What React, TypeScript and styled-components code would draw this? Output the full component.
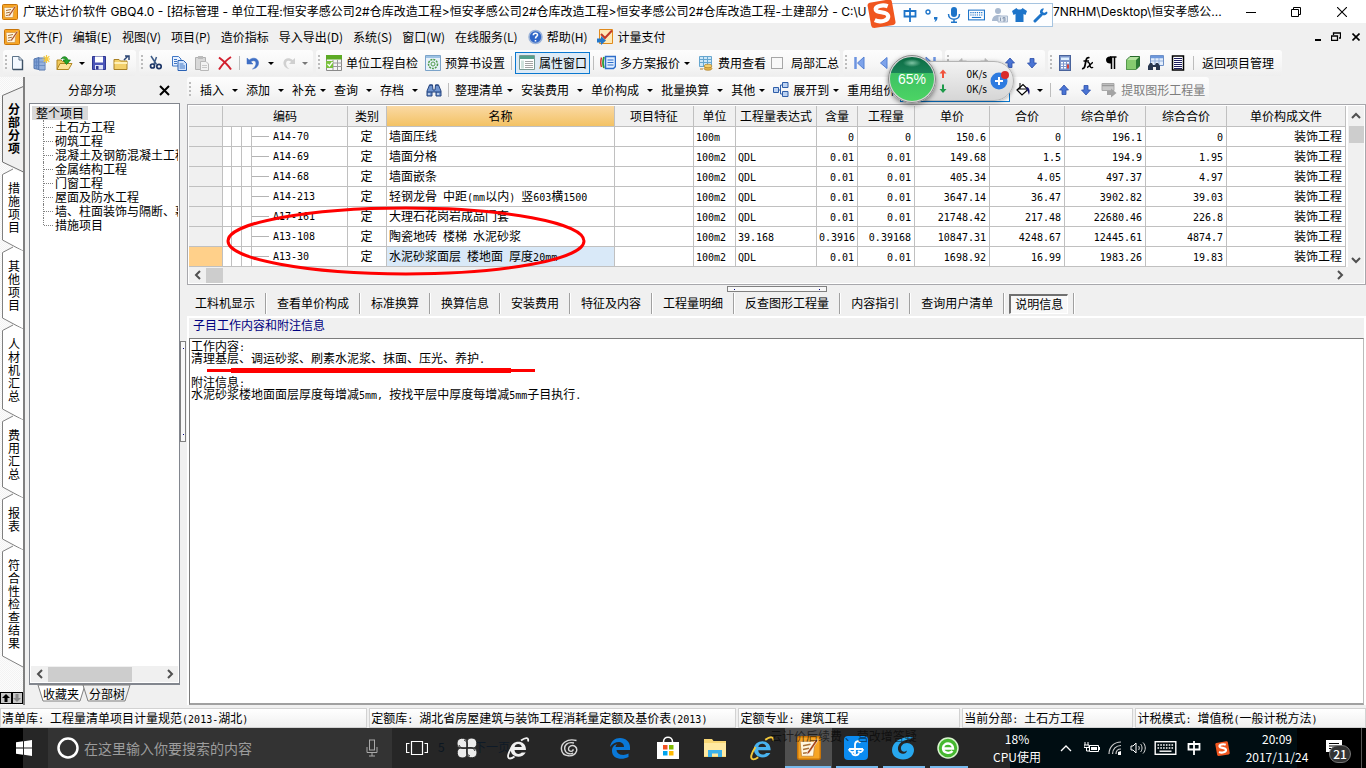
import React from "react";
import styled, { createGlobalStyle, css } from "styled-components";

const CJK = '"Noto Sans CJK SC", sans-serif';

const Global = createGlobalStyle`
  * { box-sizing: border-box; }
  body { margin: 0; background: #f0f0f0; font-family: ${CJK}; font-size: 12px; line-height: 16px; color: #000; overflow: hidden; }
  button { font: inherit; color: inherit; background: none; border: 0; padding: 0; margin: 0; white-space: nowrap; }
  svg { display: block; flex: none; }
`;

const Half = styled.span`
  font-family: "DejaVu Sans Mono", monospace;
  font-size: 10px;
  line-height: 0;
  white-space: pre;
`;

/* Half-width runs take a six pixel cell beside the twelve pixel ideographs. */
const T = ({ children }: { children: string }) => (
  <>
    {children.split(/([\x20-\x7e]+)/).map((run, i) =>
      i % 2 ? <Half key={i}>{run}</Half> : run
    )}
  </>
);

/* ---------- shell ---------- */
const Shell = styled.div`
  position: relative;
  display: flex;
  flex-direction: column;
  height: 100vh;
  overflow: hidden;
`;
const TitleBar = styled.header`
  display: flex;
  align-items: center;
  height: 23px;
  flex: none;
  background: #fff;
  padding-left: 2px;
  white-space: nowrap;
  font-family: Inter, ${CJK};
`;
const TitleText = styled.span`
  width: 1030px;
  margin-left: 5px;
  overflow: hidden;
`;
const WinButtons = styled.div`
  display: flex;
  margin-left: auto;
`;
const WinButton = styled.button<{ $w: number }>`
  width: ${(p) => p.$w}px;
  height: 22px;
  display: flex;
  align-items: center;
  justify-content: center;
`;
const MenuBar = styled.nav`
  display: flex;
  align-items: center;
  gap: 10px;
  height: 27px;
  flex: none;
  padding-left: 4px;
`;
const MenuItem = styled.button`
  display: flex;
  align-items: center;
  gap: 4px;
`;
const ToolRow = styled.div`
  display: flex;
  gap: 3px;
  height: 26px;
  flex: none;
  padding-left: 3px;
`;
const Segment = styled.div<{ $w: number }>`
  display: flex;
  align-items: center;
  width: ${(p) => p.$w}px;
  flex: none;
  height: 26px;
  white-space: nowrap;
  border-radius: 3px;
  background: linear-gradient(#fdfdfd, #f6f6f6 60%, #eee);
`;
const Grip = styled.span<{ $r?: number }>`
  width: 2px;
  height: 16px;
  margin: 0 ${(p) => p.$r ?? 5}px 0 2px;
  flex: none;
  background: repeating-linear-gradient(#bcbcbc 0 2px, transparent 2px 4px);
`;
const Tool = styled.button<{ $w?: number; $dim?: boolean; $end?: boolean }>`
  display: flex;
  align-items: center;
  justify-content: ${(p) => (p.$end ? "flex-end" : "flex-start")};
  gap: 4px;
  height: 22px;
  flex: none;
  width: ${(p) => (p.$w ? p.$w + "px" : "auto")};
  color: ${(p) => (p.$dim ? "#7d7d7d" : "#000")};
`;
const Pressed = styled(Tool)`
  border: 1px solid #0a78d0;
  background: #deebf6;
  padding-left: 3px;
`;
const Divider = styled.span<{ $l?: number; $r?: number }>`
  width: 1px;
  height: 14px;
  flex: none;
  background: #bdbdbd;
  margin: 0 ${(p) => p.$r ?? 6}px 0 ${(p) => p.$l ?? 0}px;
`;
const Caret = styled.span<{ $dim?: boolean; $l?: number }>`
  border: 3px solid transparent;
  border-top-color: ${(p) => (p.$dim ? "#777" : "#000")};
  border-bottom: 0;
  width: 6px;
  margin-left: ${(p) => p.$l ?? 0}px;
  flex: none;
`;
const DropTool = styled.button<{ $tight?: boolean }>`
  display: flex;
  align-items: center;
  gap: ${(p) => (p.$tight ? 4 : 8)}px;
  margin-right: 8px;
  flex: none;
`;
const Check = styled.label`
  display: flex;
  align-items: center;
  gap: 8px;
  input { appearance: none; width: 12px; height: 12px; margin: 0; border: 1px solid #a6a6a6; background: #f8f8f8; }
`;

/* ---------- work area ---------- */
const Work = styled.div`
  display: flex;
  flex: 1;
  min-height: 0;
  margin-top: 1px;
`;
const Strip = styled.nav`
  width: 25px;
  flex: none;
  display: flex;
  flex-direction: column;
  overflow: hidden;
  background: repeating-conic-gradient(#f3f3f3 0 25%, #fcfcfc 0 50%) 0 0 / 2px 2px;
  border-right: 2px solid #808080;
`;
const SideTab = styled.button<{ $on?: boolean }>`
  position: relative;
  flex: none;
  width: 25px;
  padding: ${(p) => (p.$on ? "25px 5px 15px 8px" : "12px 5px 14px 8px")};
  line-height: 13px;
  font-weight: ${(p) => (p.$on ? 700 : 400)};
  white-space: normal;
  word-break: break-all;
  span { position: relative; display: block; width: 12px; }
  svg { position: absolute; left: 0; top: 0; overflow: visible; }
`;
const StripEnd = styled.div`
  display: flex;
  margin: auto 0 1px;
`;
const StripButton = styled.button`
  width: 12px;
  height: 12px;
  border: 1px solid #000;
  background: #c8c8c8;
  display: grid;
  place-items: center;
`;
const TreePane = styled.aside`
  width: 151px;
  margin-left: 4px;
  flex: none;
  display: flex;
  flex-direction: column;
  padding-bottom: 3px;
`;
const PaneHead = styled.div`
  display: flex;
  align-items: center;
  height: 26px;
  padding: 0 10px 0 39px;
  justify-content: space-between;
  flex: none;
`;
const TreeBox = styled.div`
  flex: 1;
  min-height: 0;
  display: flex;
  flex-direction: column;
  justify-content: space-between;
  background: #fff;
  border: 1px solid #82868e;
  border-bottom-width: 2px;
  padding: 2px 1px 1px;
`;
const Tree = styled.ul`
  list-style: none;
  margin: 0;
  padding: 0 0 12px;
  line-height: 14px;
  overflow: hidden;
  white-space: nowrap;
`;
const Root = styled.li`
  width: 56px;
  margin-left: 1px;
  padding-left: 4px;
  background: #d9d9d9;
`;
const Leaf = styled.li`
  display: flex;
  margin-left: 12px;
  height: 14px;
  border-left: 1px dotted #808080;
  &:last-child { height: 7px; }
  &::before { content: ""; width: 9px; height: 7px; border-bottom: 1px dotted #808080; margin-right: 2px; flex: none; }
`;
const HScroll = styled.div`
  display: flex;
  align-items: center;
  height: 16px;
  flex: none;
  background: #f0f0f0;
`;
const ScrollButton = styled.button`
  width: 17px;
  height: 15px;
  display: grid;
  place-items: center;
`;
const Thumb = styled.div<{ $w: number; $h: number; $t?: number }>`
  width: ${(p) => p.$w}px;
  height: ${(p) => p.$h}px;
  margin-top: ${(p) => p.$t ?? 0}px;
  background: #cdcdcd;
`;
const ScrollCorner = styled.div`
  width: 16px;
  flex: none;
`;
const Push = styled.span`
  flex: 1;
`;
const FootTabs = styled.div`
  display: flex;
  height: 17px;
  flex: none;
  padding-left: 9px;
`;
const FootTab = styled.button`
  position: relative;
  width: 46px;
  line-height: 16px;
  span { position: relative; }
  svg { position: absolute; left: 0; top: 0; overflow: visible; }
`;
const SideSplit = styled.div`
  width: 7px;
  flex: none;
  display: flex;
  flex-direction: column;
  padding-top: 264px;
`;
const Handle = styled.div<{ $side?: boolean }>`
  border: 1px solid #808080;
  background: #f8f8f8;
  display: flex;
  justify-content: space-between;
  flex-direction: ${(p) => (p.$side ? "column" : "row")};
  align-items: center;
  ${(p) => (p.$side ? "width: 6px; height: 101px; padding: 6px 0;" : "width: 100px; height: 6px; padding: 0 6px;")}
  &::before, &::after { content: ""; width: 1px; height: 1px; background: #000080; }
`;
const Main = styled.main`
  flex: 1;
  min-width: 0;
  display: flex;
  flex-direction: column;
`;
const GridBox = styled.section`
  position: relative;
  border: 1px solid #a8a8ac;
  padding: 1px;
  background: #fff;
  margin-top: 1px;
  flex: none;
`;
const GridTop = styled.div`
  display: flex;
`;
const GridClip = styled.div`
  flex: 1;
  min-width: 0;
  height: 161px;
  overflow: hidden;
`;
const Table = styled.table`
  width: 100%;
  table-layout: fixed;
  border-collapse: separate;
  border-spacing: 0;
`;
const line = css`
  border-right: 1px solid #c0c0c0;
  border-bottom: 1px solid #c0c0c0;
`;
const Th = styled.th<{ $hot?: boolean }>`
  ${line}
  height: 21px;
  padding: 0 0 1px;
  font-weight: 400;
  white-space: nowrap;
  background: ${(p) => (p.$hot ? "linear-gradient(#fad9a4, #f3c264)" : "#f0f0f0")};
`;
const Td = styled.td<{ $a?: "right" | "center"; $bg?: string }>`
  ${line}
  height: 20px;
  padding: 0 3px 2px 2px;
  text-align: ${(p) => p.$a ?? "left"};
  white-space: nowrap;
  overflow: hidden;
  background: ${(p) => p.$bg ?? "#fff"};
`;
const CodeTd = styled(Td)`
  padding: 0;
`;
const CodeCell = styled.div`
  display: flex;
  align-items: center;
  height: 19px;
`;
const Guide = styled.i<{ $w: number }>`
  width: ${(p) => p.$w}px;
  height: 19px;
  border-right: 1px solid #c0c0c0;
`;
const Dash = styled.i`
  width: 17px;
  height: 1px;
  background: #b4b4b4;
  margin-right: 4px;
`;
const VScroll = styled.div`
  width: 18px;
  border-left: 2px solid #fff;
  flex: none;
  background: #f0f0f0;
  display: flex;
  flex-direction: column;
  align-items: center;
  padding-top: 2px;
`;
const Splitter = styled.div`
  display: flex;
  justify-content: center;
  height: 7px;
  padding-top: 1px;
  flex: none;
`;
const Tabs = styled.div`
  display: flex;
  height: 24px;
  flex: none;
  padding: 1px 0 2px;
`;
const Tab = styled.button`
  padding: 0 10px 2px 11px;
  border-right: 1px solid #a0a0a0;
  box-shadow: 1px 0 #fff;
  &:first-child { padding-left: 8px; }
`;
const TabOn = styled(Tab)`
  padding: 0 5px;
  span {
    display: block;
    height: 20px;
    line-height: 16px;
    padding: 0 4px;
    border: 1px solid #fff;
    border-top: 2px solid #707070;
    border-left: 2px solid #707070;
    background: #f8f8f8;
  }
`;
const Info = styled.section`
  flex: 1;
  min-height: 0;
  display: flex;
  flex-direction: column;
  border: 2px solid #fff;
  border-bottom: 0;
`;
const InfoHead = styled.h2`
  margin: 0;
  height: 20px;
  font-size: 12px;
  font-weight: 400;
  line-height: 14px;
  padding-left: 4px;
  color: #000080;
  flex: none;
`;
const InfoBody = styled.div`
  position: relative;
  flex: 1;
  background: #fff;
  border: 1px solid #7c7c7c;
  border-right-color: #bbb;
  border-bottom: 2px solid #a0a0a0;
  padding: 1px;
  line-height: 12px;
  p { margin: 0 0 12px; }
`;
const Ink = styled.svg<{ $x: number; $y: number }>`
  position: absolute;
  left: ${(p) => p.$x}px;
  top: ${(p) => p.$y}px;
  pointer-events: none;
`;

/* ---------- status bar and taskbar ---------- */
const Status = styled.footer`
  display: flex;
  gap: 2px;
  height: 23px;
  padding-top: 3px;
  flex: none;
`;
const StatusCell = styled.div<{ $g: number }>`
  flex: ${(p) => p.$g} 1 0;
  min-width: 0;
  border: 1px solid #d2d2d2;
  background: linear-gradient(#fff, #f0f0f0);
  line-height: 18px;
  padding-left: 1px;
  white-space: nowrap;
  overflow: hidden;
`;
const TaskBar = styled.div`
  position: relative;
  display: flex;
  height: 40px;
  flex: none;
  background: #262626;
  color: #fff;
`;
const Start = styled.button`
  width: 48px;
  display: grid;
  place-items: center;
  background: linear-gradient(90deg, #000 0 23px, #262626 23px);
`;
const Search = styled.label`
  display: flex;
  align-items: center;
  width: 344px;
  padding: 0 14px 0 8px;
  gap: 4px;
  background: #333;
  input { flex: 1; min-width: 0; border: 0; padding: 0; background: none; outline: 0; font: 14px/20px ${CJK}; color: #9c9c9c; }
  input::placeholder { color: #9c9c9c; opacity: 1; }
`;
const Task = styled.button<{ $w: number; $run?: boolean; $on?: boolean }>`
  position: relative;
  width: ${(p) => p.$w}px;
  display: grid;
  place-items: center;
  flex: none;
  background: ${(p) => (p.$on ? "#505050" : "none")};
  &::after {
    content: ${(p) => (p.$run ? '""' : "none")};
    position: absolute;
    left: ${(p) => (p.$on ? 0 : 4)}px;
    right: 1px;
    bottom: 0;
    height: 2px;
    background: #76b9ed;
  }
`;
const Tray = styled.div`
  display: flex;
  align-items: center;
  margin-left: auto;
  width: 356px;
  background: linear-gradient(90deg, #000d12 0 287px, #000 287px 351px, #555 351px 352px, #000 352px);
`;
const TrayItem = styled.button<{ $w: number }>`
  width: ${(p) => p.$w}px;
  height: 40px;
  display: grid;
  place-items: center;
  flex: none;
`;
const TrayText = styled.div<{ $w: number; $back?: number }>`
  width: ${(p) => p.$w}px;
  margin-left: ${(p) => -(p.$back ?? 0)}px;
  text-align: center;
  line-height: 18px;
  flex: none;
`;
const Ghost = styled.span<{ $x: number; $y: number; $c: string }>`
  position: absolute;
  left: ${(p) => p.$x}px;
  top: ${(p) => p.$y}px;
  color: ${(p) => p.$c};
  white-space: pre;
  pointer-events: none;
`;
const Badge = styled.span`
  position: absolute;
  left: 15px;
  top: 17px;
  width: 22px;
  height: 18px;
  border-radius: 9px;
  border: 1px solid #777;
  background: #333;
  line-height: 16px;
  text-align: center;
  font-weight: 500;
`;
const Notice = styled(TrayItem)`
  position: relative;
`;

/* ---------- floating widgets ---------- */
const Ime = styled.div`
  position: absolute;
  left: 872px;
  top: 3px;
  width: 181px;
  height: 24px;
  display: flex;
  align-items: center;
  padding-left: 28px;
  background: #fdfeff;
  border: 1px solid #a6c4e0;
`;
const ImeLogo = styled.div`
  position: absolute;
  left: -6px;
  top: -5px;
`;
const ImeKey = styled.button<{ $w: number }>`
  width: ${(p) => p.$w}px;
  display: grid;
  place-items: center;
`;
const Meter = styled.div`
  position: absolute;
  left: 888px;
  top: 54px;
  width: 127px;
  height: 52px;
`;
const Pill = styled.div`
  position: absolute;
  left: 24px;
  top: 7px;
  width: 102px;
  height: 40px;
  border-radius: 14px 20px 20px 14px;
  border: 1px solid #b4b4b4;
  background: linear-gradient(#f2f2f2, #d6d6d6);
  box-shadow: 0 1px 4px rgba(0, 0, 0, 0.35);
  display: grid;
  grid-template-columns: 10px 34px;
  align-content: center;
  padding-left: 26px;
  column-gap: 4px;
  font-size: 10px;
  line-height: 15px;
  span { text-align: right; }
`;
const Plus = styled.div`
  position: absolute;
  right: 3px;
  top: 14px;
`;
const Ball = styled.div`
  position: absolute;
  left: 0;
  top: 1px;
  width: 48px;
  height: 48px;
  border-radius: 24px;
  border: 2px solid #d8d8d8;
  outline: 1px solid #8a8a8a;
  outline-offset: -1px;
  background: radial-gradient(ellipse 9px 4px at 50% 6px, #7fc4a4, transparent), linear-gradient(#0c6b43 0, #1b8358 16px, #3dc163 16px, #4cd464);
  color: #fff;
  font: 14px/44px "Liberation Sans", sans-serif;
  text-align: center;
  box-shadow: 0 2px 5px rgba(0, 0, 0, 0.5);
`;
const Combo = styled.select`
  appearance: none;
  height: 24px;
  width: 110px;
  flex: none;
  margin: 0 5px;
  border: 1px solid #0a78d0;
  border-radius: 0;
  background: #fff;
`;

/* ---------- drawings ---------- */
const I = ({ w = 16, h = 16, children }: { w?: number; h?: number; children: React.ReactNode }) => (
  <svg width={w} height={h} viewBox={`0 0 ${w} ${h}`} fill="none">{children}</svg>
);
const AppLogo = ({ s = 16 }: { s?: number }) => (
  <svg width={s} height={s} viewBox="0 0 16 16">
    <rect x=".5" y=".5" width="15" height="15" rx="1" fill="#f7a524" stroke="#c87408" />
    <path d="M2 3.500h10l-1 10H3z" fill="#fff6e0" stroke="#c98b3a" strokeWidth=".6" />
    <path d="M4 6.500l5-1M4 9l4-.8M4 11.500l4-.5" stroke="#a8713a" />
    <path d="M12.800 2L7 10.500l-.5 2 1.800-1.200L14 3z" fill="#a8471a" stroke="#fff" strokeWidth=".4" />
  </svg>
);
const NewDoc = () => <I><path d="M1.500 1.500h6.500l3.500 3.500v9.500h-10z" fill="#f4f9ff" stroke="#5d7389" /><path d="M8 1.500v3.500h3.500" stroke="#5d7389" /><path d="M11.500 5v9.500H2" stroke="#3d5166" strokeWidth="1.400" /></I>;
const NewBuild = () => <I w={17}><path d="M1 4l5-1.500v12l-5-1z" fill="#7d9fd4" stroke="#5577ae" /><path d="M6 3h6v12H6z" fill="#b4cbee" stroke="#5577ae" /><path d="M3.500 4v10M8 3v12M10 3v12M1 7h11M1 10.500h11" stroke="#5d82bd" strokeWidth=".7" /><path d="M13.500 0v8M9.500 4h8M10.700 1.200l5.600 5.600M16.300 1.200l-5.600 5.600" stroke="#f5c93a" strokeWidth="1.200" /></I>;
const Open = () => <I w={17}><path d="M1 14.500V5h4l1.500 1.500H12V14.500z" fill="#f1c95c" stroke="#b08620" /><path d="M1 14.500l3-6h12l-3.500 6z" fill="#ffe396" stroke="#b08620" /><path d="M5 4c2-3.500 6-3 7 1h2.500l-4 4.500L7 5h2.500C9 3.500 7 2.500 5 4z" fill="#27a52a" stroke="#0d7413" strokeWidth=".7" /></I>;
const Save = () => <I><path d="M1.500 1.500h13v13h-13z" fill="#4b55b8" stroke="#2d3590" /><path d="M4 1.500h8v6H4z" fill="#fff" /><path d="M4 10h8v4.500H4z" fill="#dfe3f7" /><path d="M5 11h2.500v3.500H5z" fill="#2d3590" /></I>;
const FolderUp = () => <I w={17}><path d="M1 14.500V4.500h5l1.500 1.500H14v8.500z" fill="#f3d06b" stroke="#a98024" /><path d="M1.500 8h12.500" stroke="#fff0b8" strokeWidth="2" /><path d="M11 5l4-4M12 1h4v4" stroke="#2d4775" strokeWidth="1.500" /></I>;
const Cut = () => <I><path d="M3 1l5.500 8.500M8.500 2L6 9" stroke="#3c5a86" strokeWidth="1.500" /><circle cx="4.500" cy="11" r="2" stroke="#1c3566" strokeWidth="1.700" /><circle cx="11" cy="11.500" r="2.200" stroke="#1c3566" strokeWidth="1.700" /></I>;
const Copy = () => <I w={17}><path d="M1.500 1.500h6l2.500 2.500v7H1.500z" fill="#e8f1ff" stroke="#3f76c4" /><path d="M7 5.500h5.500l3 3v7H7z" fill="#d2e3fc" stroke="#2a62b4" /><path d="M3 4.500h3M3 6.500h3M3 8.500h3M8.500 9h4M8.500 11h5.500M8.500 13h5.500" stroke="#3f76c4" /></I>;
const Paste = () => <I><path d="M1.500 2.500h10v12h-10z" fill="#d8d8d8" stroke="#b0b0b0" /><path d="M4 1h5v3H4z" fill="#bbb" /><path d="M6.500 6.500H12l2.500 2.500v6.500h-8z" fill="#f2f2f2" stroke="#b8b8b8" /><path d="M8 10.500h5M8 12.500h5" stroke="#c8c8c8" /></I>;
const Del = () => <I><path d="M2 2.500c4 3 9 7.500 12 12M14 2C9 5 5 10 2 14.500" stroke="#d21f2e" strokeWidth="2" /></I>;
const undoPath = "M2 3v6h6L5.800 6.800C9 4.500 11.500 6 10.800 9.500 10.400 11.500 9 13 7.500 14 11.500 13.500 14 10.500 13.500 7 12.800 3 8 1.800 4.200 5z";
const Undo = () => <I><path d={undoPath} fill="#3f6fc4" stroke="#3f6fc4" strokeWidth=".5" /></I>;
const Redo = () => <I><path transform="matrix(-1 0 0 1 16 0)" d={undoPath} fill="#d0d0d0" /></I>;
const CheckTable = () => <I><path d="M.5.5h15v15H.5z" fill="#f5f5f5" stroke="#8a8a8a" /><path d="M0 0h16v4.500H0z" fill="#5caa24" /><path d="M1 8h15M1 11.500h15M7 5v10M11.500 5v10" stroke="#9a9a9a" /><path d="M0 6h7v7H0z" fill="#7ac23e" /><path d="M1.500 9l2 2 3-4" stroke="#fff" strokeWidth="1.300" /></I>;
const BookSet = () => <I><path d="M.5.5h15v15H.5z" fill="#e7f1fa" stroke="#7ba3c9" /><path d="M1 2h14" stroke="#9cc2e4" strokeWidth="2" /><circle cx="8" cy="9" r="4.500" stroke="#4f9c4a" strokeWidth="1.500" strokeDasharray="2 1" /><circle cx="8" cy="9" r="2" stroke="#4f9c4a" /></I>;
const PropWin = () => <I><path d="M.5.5h15v14H.5z" fill="#fff" stroke="#7a9a94" /><path d="M1 1h14v3H1z" fill="#52a08c" /><path d="M6 6.500h8M6 8.500h8M6 10.500h8M6 12.500h8" stroke="#a4a4a4" /><path d="M2 5.500h3v8H2z" fill="#cfe2dc" /></I>;
const Quote = () => <I><path d="M1.500 2.500Q0 8 1.500 12" stroke="#d3372c" strokeWidth="1.500" /><path d="M4 2Q2 8 4 13" stroke="#2c9a35" strokeWidth="1.800" /><path d="M5.500 1.500h10v10l-2 2h-8z" fill="#e2efff" stroke="#2d6dc9" strokeWidth="1.500" /><path d="M7.500 5h6M7.500 7.500h6M7.500 10h6" stroke="#2d6dc9" /></I>;
const FeeView = () => <I><path d="M1.500 1.500h12v10h-12z" fill="#cde7f7" stroke="#66a6cf" /><path d="M1.500 4.500h12M1.500 7.500h12M5.500 1.500v10M9.500 1.500v10" stroke="#66a6cf" /><ellipse cx="10" cy="13.500" rx="4" ry="1.800" fill="#e5b449" stroke="#a1731c" strokeWidth=".6" /><ellipse cx="10" cy="11" rx="4" ry="1.800" fill="#f5cf6d" stroke="#a1731c" strokeWidth=".6" /><path d="M2 14h3" stroke="#b07c30" /></I>;
const NavFirst = () => <I><path d="M3.500 2v12" stroke="#6d94e0" strokeWidth="2.500" /><path d="M12 2v12L5.500 8z" fill="#7ea3ea" stroke="#5580d2" /></I>;
const NavLast = () => <I><path d="M12.500 2v12" stroke="#6d94e0" strokeWidth="2.500" /><path d="M4 2v12L10.500 8z" fill="#7ea3ea" stroke="#5580d2" /></I>;
const NavPrev = () => <I><path d="M11 2.500v11L4.500 8z" fill="#7ea3ea" stroke="#5580d2" /></I>;
const Arrow = ({ d, off }: { d: number; off?: boolean }) => (
  <I w={12} h={12}><path transform={`rotate(${d} 6 6)`} d="M6 1l4.500 5H8v4.500H4V6H1.500z" fill={off ? "#c6c6c6" : "#4a74d4"} stroke={off ? "#b8b8b8" : "#2c4fa8"} strokeWidth=".8" /></I>
);
const Calc = () => <I w={14}><rect x="1.500" y=".5" width="11" height="15" fill="#7c96cc" stroke="#49639b" /><path d="M3 2.500h8v2.500H3z" fill="#dff0ff" /><path d="M3 7h2v1.500H3zM6 7h2v1.500H6zM9 7h2v1.500H9zM3 9.500h2V11H3zM6 9.500h2V11H6zM3 12h2v1.500H3zM6 12h2v1.500H6z" fill="#fff" /><path d="M9 9.500h2v4H9z" fill="#d8433a" /></I>;
const Fx = () => <I><path d="M2 13.500c2 .5 2.700-1 3.200-4l.8-4C6.500 3 7.500 2.300 9.500 2.800M3.500 6h5.500" stroke="#000" strokeWidth="1.700" /><path d="M7.500 7.500c2.500-1 2 4 3.500 5 .8.500 1.500.3 2-.5M13 7.500c-2 0-3.500 4.500-6 5" stroke="#000" strokeWidth="1.400" /></I>;
const Para = () => <I w={14}><path d="M7 1.500C4 1 2 2.500 2 5s2 3.500 4 3.500h1z" fill="#000" /><path d="M7.500 1.500V14M10.500 1.500V14M6 2h6.500" stroke="#000" strokeWidth="1.500" /></I>;
const Cube = () => <I><path d="M1.500 5L5 1.500h9.500V11L11 14.500H1.500z" fill="#5fae50" stroke="#27692b" /><path d="M1.500 5H11v9.500H1.500z" fill="#86cb6f" /><path d="M11 5l3.500-3.500V11L11 14.500z" fill="#2c7a35" /><path d="M2 5l3-3h9l-3 3z" fill="#b6e3a2" /></I>;
const FindTable = () => <I><path d="M2.500.5h13v10h-13z" fill="#e4eefc" stroke="#6d8fc5" /><path d="M3 2h12" stroke="#6d98dc" strokeWidth="2.500" /><path d="M3 6h12M7 3v7M11 3v7" stroke="#93afd9" /><path d="M0 15v-4l2-3h2l1 2h2l1-2h2l2 3v4H8v-3H5v3z" fill="#28374f" /></I>;
const List = () => <I w={14}><path d="M1.500 1h11v14h-11z" fill="#fff" stroke="#000" strokeWidth="1.500" /><path d="M3 3.500h8M3 5.500h8M3 7.500h8M3 9.500h8M3 11.500h8M3 13.500h8" stroke="#1b1b5c" /></I>;
const Bino = () => <I><path d="M1 14V9l2.500-6h3L7 8h2l.5-5h3L15 9v5h-5v-4H6v4z" fill="#6f94cf" stroke="#23427c" /><path d="M3.500 3h3M9.500 3h3M1 10h5M10 10h5" stroke="#23427c" /><path d="M3 11v2M12 11v2" stroke="#fff" /></I>;
const Expand = () => <I><path d="M.5 5.500h5v5h-5zM9.500.5h5.500v5H9.500zM9.500 9.500h5.500v5H9.500z" fill="#bcd2f2" stroke="#2f5ea8" /><path d="M5.500 8h2M9.500 3h-2v9h2" stroke="#2f5ea8" /></I>;
const Bucket = () => <I><path d="M2 8l6-5.500 5 5L7 13z" fill="#fff" stroke="#000" strokeWidth="1.200" /><path d="M5 1v6M3 7h9" stroke="#000" /><path d="M12 5c3 1 3 5 2 8-1-2-1-5-3-6z" fill="#15156b" /></I>;
const Extract = () => <I><path d="M1 1.500h12v7H1z" fill="#c9c9c9" stroke="#aaa" /><path d="M1 3.500h12" stroke="#999" strokeWidth="1.500" /><path d="M6 9h4V6.500l5.500 4.500-5.500 4.500v-2.500H6z" fill="#a4a4a4" /></I>;
const Help = () => <I w={15}><circle cx="7.500" cy="8" r="6.500" fill="#2f66c8" stroke="#9db4d8" strokeWidth="1.500" /><path d="M5.300 6.200C5.500 3.500 9.800 3.700 9.500 6.200 9.300 7.500 7.500 7.600 7.500 9.500M7.500 11v1.500" stroke="#fff" strokeWidth="1.600" /></I>;
const Pay = () => <I><path d="M2.500.5h13v14h-13z" fill="#ffe9b5" stroke="#e08a1c" /><path d="M4 5l4 4 7-7.500" stroke="#c23a25" strokeWidth="2" /><path d="M0 9.500h4V7l5 4.500L4 16v-2.500H0z" fill="#2377c9" /></I>;
const Chevron = ({ d }: { d: string }) => <I w={10} h={10}><path d={d} stroke="#505050" strokeWidth="2" /></I>;
const LEFT = "M7 1L3 5l4 4";
const RIGHT = "M3 1l4 4-4 4";
const UP = "M1 7l4-4 4 4";
const DOWN = "M1 3l4 4 4-4";
const SogouS = ({ s }: { s: number }) => (
  <svg width={s} height={s} viewBox="0 0 28 28">
    <path d="M.5 6Q.5 4 2.500 3.500L21 .5Q23.500 0 24 2.500L27.500 22Q28 24.500 25.500 25L7 28Q4.500 28 4 25.500z" fill="#f0561f" />
    <path d="M20 7C15 5 7.500 7 8.500 10.500c1 3.500 11.500 1 12 6 .4 4.500-7.500 6.500-13 4" fill="none" stroke="#fff" strokeWidth="4" />
  </svg>
);
const Keyboard = ({ c, w }: { c: string; w: number }) => <svg width={w} height="14" viewBox="0 0 22 14"><rect x=".7" y=".7" width="20.600" height="12.600" fill="none" stroke={c} strokeWidth="1.400" /><path d="M3 4h16M3 7h16" stroke={c} strokeWidth="1.600" strokeDasharray="1.600 1.200" /><path d="M5 10.200h12" stroke={c} strokeWidth="1.400" /></svg>;
const Zhong = ({ c }: { c: string }) => <I w={14}><path d="M1.500 4h11v5.500h-11zM7 1v14" stroke={c} strokeWidth="1.800" /></I>;
const IeE = ({ c, ring, s = 26 }: { c: string; ring: string; s?: number }) => <svg width={s} height={s} viewBox="0 0 24 24" fill="none"><path d="M20 14H8.500c.3 4.500 5.500 4.800 7.200 2.500h4C16.500 23 4.500 22 4.500 13S20 2.500 20 14zM8.600 11h7.200c-.5-4-6.700-4-7.200 0z" fill={c} fillRule="evenodd" /><path d="M15 4.500C20 1 23 1.500 22 5.500M6 11C2 17 .5 22 4 22.500c1.500 0 3-.8 4.500-2" stroke={ring} strokeWidth="1.800" /></svg>;

/* ---------- data ---------- */
const menus = ["编辑(E)", "视图(V)", "项目(P)", "造价指标", "导入导出(D)", "系统(S)", "窗口(W)", "在线服务(L)"];
const sideTabs = ["分部分项", "措施项目", "其他项目", "人材机汇总", "费用汇总", "报表", "符合性检查结果"];
const leaves = ["土石方工程", "砌筑工程", "混凝土及钢筋混凝土工程", "金属结构工程", "门窗工程", "屋面及防水工程", "墙、柱面装饰与隔断、幕墙工程", "措施项目"];
const cols: [string, number?][] = [["", 34], ["编码", 125], ["类别", 39], ["名称", 228], ["项目特征", 79], ["单位", 42], ["工程量表达式", 81], ["含量", 41], ["工程量", 57], ["单价", 75], ["合价", 75], ["综合单价", 81], ["综合合价", 81], ["单价构成文件"]];
const rows = [
  ["A14-70", "墙面压线", "100m", "", "0", "0", "150.6", "0", "196.1", "0"],
  ["A14-69", "墙面分格", "100m2", "QDL", "0.01", "0.01", "149.68", "1.5", "194.9", "1.95"],
  ["A14-68", "墙面嵌条", "100m2", "QDL", "0.01", "0.01", "405.34", "4.05", "497.37", "4.97"],
  ["A14-213", "轻钢龙骨 中距(mm以内) 竖603横1500", "100m2", "QDL", "0.01", "0.01", "3647.14", "36.47", "3902.82", "39.03"],
  ["A17-161", "大理石花岗岩成品门套", "100m2", "QDL", "0.01", "0.01", "21748.42", "217.48", "22680.46", "226.8"],
  ["A13-108", "陶瓷地砖 楼梯 水泥砂浆", "100m2", "39.168", "0.3916", "0.39168", "10847.31", "4248.67", "12445.61", "4874.7"],
  ["A13-30", "水泥砂浆面层 楼地面 厚度20mm", "100m2", "QDL", "0.01", "0.01", "1698.92", "16.99", "1983.26", "19.83"],
];
const detailTabs = ["工料机显示", "查看单价构成", "标准换算", "换算信息", "安装费用", "特征及内容", "工程量明细", "反查图形工程量", "内容指引", "查询用户清单"];
const status: [string, number][] = [["清单库: 工程量清单项目计量规范(2013-湖北)", 368], ["定额库: 湖北省房屋建筑与装饰工程消耗量定额及基价表(2013)", 368], ["定额专业: 建筑工程", 221], ["当前分部: 土石方工程", 170], ["计税模式: 增值税(一般计税方法)", 230]];

const Drop = ({ t, tight }: { t: string; tight?: boolean }) => (
  <DropTool $tight={tight}>{t}<Caret /></DropTool>
);

const SideTabShape = ({ n, on }: { n: number; on: boolean }) => {
  const h = on ? 92 : 26 + 13 * n;
  return on ? (
    <svg width="25" height={h}><path d="M25 9L2.500 18.500V85L25 95.500z" fill="#f0f0f0" /><path d="M24.500 0v9L2.500 18.500V85L24.500 95.500" fill="none" stroke="#707070" /></svg>
  ) : (
    <svg width="25" height={h}><path d={`M13 0L2.500 5.500V${h - 7}L23 ${h + 4}V4z`} fill="#fff" /><path d={`M13 0L2.500 5.500V${h - 7}L23 ${h + 4}`} fill="none" stroke="#808080" /></svg>
  );
};

export default function App() {
  return (
    <Shell>
      <Global />
      <TitleBar>
        <AppLogo />
        <TitleText>广联达计价软件 GBQ4.0 - [招标管理 - 单位工程:恒安孝感公司2#仓库改造工程&gt;恒安孝感公司2#仓库改造工程&gt;恒安孝感公司2#仓库改造工程-土建部分 - C:\U</TitleText>
        <span>7NRHM\Desktop\恒安孝感公...</span>
        <WinButtons>
          <WinButton $w={45} aria-label="最小化"><I w={10} h={10}><path d="M0 5.500h10" stroke="#000" /></I></WinButton>
          <WinButton $w={45} aria-label="还原"><I w={10} h={10}><path d="M.5 2.500h7v7h-7zM2.500 2V.5h7v7H8" stroke="#000" /></I></WinButton>
          <WinButton $w={48} aria-label="关闭"><I w={10} h={10}><path d="M0 0l10 10M10 0L0 10" stroke="#000" strokeWidth="1.100" /></I></WinButton>
        </WinButtons>
      </TitleBar>
      <MenuBar>
        <MenuItem><AppLogo />文件(F)</MenuItem>
        {menus.map((m) => <MenuItem key={m}>{m}</MenuItem>)}
        <MenuItem><Help />帮助(H)</MenuItem>
        <MenuItem><Pay />计量支付</MenuItem>
        <WinButtons>
          <WinButton $w={16} aria-label="最小化文档"><I w={8} h={8}><path d="M1 7h6" stroke="#000" strokeWidth="2" /></I></WinButton>
          <WinButton $w={19} aria-label="还原文档"><I w={10} h={9}><path d="M.5 4h6v4.500h-6zM2.500 3V1h7v5H8" stroke="#000" strokeWidth="1.300" /></I></WinButton>
          <WinButton $w={21} aria-label="关闭文档"><I w={8} h={8}><path d="M.5.5l7 7M7.500.5l-7 7" stroke="#000" strokeWidth="1.600" /></I></WinButton>
        </WinButtons>
      </MenuBar>

      <ToolRow>
        <Segment $w={133}>
          <Grip $r={4} />
          <Tool $w={22}><NewDoc /></Tool><Tool $w={23}><NewBuild /></Tool><Tool $w={23}><Open /></Tool><Caret />
          <Tool $w={22} $end><Save /></Tool><Tool $w={23} $end><FolderUp /></Tool>
        </Segment>
        <Segment $w={174}>
          <Grip />
          <Tool $w={23}><Cut /></Tool><Tool $w={23}><Copy /></Tool><Tool $w={23}><Paste /></Tool><Tool $w={22}><Del /></Tool>
          <Divider $r={5} />
          <Tool $w={23}><Undo /></Tool><Caret /><Tool $w={23} $end><Redo /></Tool><Caret $dim $l={5} />
        </Segment>
        <Segment $w={524}>
          <Grip $r={6} />
          <Tool $w={99}><CheckTable />单位工程自检</Tool>
          <Tool $w={85}><BookSet />预算书设置</Tool>
          <Divider $l={1} $r={3} />
          <Pressed $w={75}><PropWin />属性窗口</Pressed>
          <Divider $l={3} $r={6} />
          <DropTool $tight><Tool><Quote />多方案报价</Tool><Caret /></DropTool>
          <Tool $w={73}><FeeView />费用查看</Tool>
          <Check><input type="checkbox" />局部汇总</Check>
        </Segment>
        <Segment $w={99}>
          <Grip /><Tool $w={24}><NavFirst /></Tool><Tool $w={46}><NavPrev /></Tool><Tool><NavLast /></Tool>
        </Segment>
        <Segment $w={100}>
          <Grip $r={7} /><Tool $w={23}><Arrow d={270} off /></Tool><Tool $w={25}><Arrow d={90} off /></Tool><Tool $w={22}><Arrow d={0} /></Tool><Tool><Arrow d={180} /></Tool>
        </Segment>
        <Segment $w={234}>
          <Grip $r={6} />
          <Tool $w={22}><Calc /></Tool><Tool $w={24}><Fx /></Tool><Tool $w={21}><Para /></Tool><Tool $w={23}><Cube /></Tool><Tool $w={23}><FindTable /></Tool><Tool $w={22}><List /></Tool>
          <Divider $r={8} /><Tool>返回项目管理</Tool>
        </Segment>
      </ToolRow>

      <Work>
        <Strip>
          {sideTabs.map((t, i) => (
            <SideTab key={t} $on={i === 0}><SideTabShape n={t.length} on={i === 0} /><span>{t}</span></SideTab>
          ))}
          <StripEnd>
            <StripButton aria-label="上"><I w={8} h={8}><path d="M4 0l4 4H5.500v4h-3V4H0z" fill="#000" /></I></StripButton>
            <StripButton aria-label="下"><I w={8} h={8}><path d="M4 8l4-4H5.500V0h-3v4H0z" fill="#888" /></I></StripButton>
          </StripEnd>
        </Strip>
        <TreePane>
          <PaneHead>分部分项<button aria-label="关闭面板"><I w={11} h={11}><path d="M1 1l9 9M10 1l-9 9" stroke="#000" strokeWidth="2" /></I></button></PaneHead>
          <TreeBox>
            <Tree>
              <Root>整个项目</Root>
              {leaves.map((l) => <Leaf key={l}>{l}</Leaf>)}
            </Tree>
            <HScroll>
              <ScrollButton aria-label="左"><Chevron d={LEFT} /></ScrollButton><Thumb $w={84} $h={15} /><Push /><ScrollButton aria-label="右"><Chevron d={RIGHT} /></ScrollButton>
            </HScroll>
          </TreeBox>
          <FootTabs>
            <FootTab><svg width="46" height="17"><path d="M0 0l5 16h37l5-16z" fill="#fff" stroke="#808080" /></svg><span>收藏夹</span></FootTab>
            <FootTab><svg width="46" height="17"><path d="M-1 0l5 16h37l5-16z" fill="#f0f0f0" stroke="#808080" /></svg><span>分部树</span></FootTab>
          </FootTabs>
        </TreePane>
        <SideSplit><Handle $side /></SideSplit>
        <Main>
          <Segment $w={1022}>
            <Grip $r={9} />
            <Drop t="插入" /><Drop t="添加" /><Drop t="补充" tight /><Drop t="查询" /><Drop t="存档" />
            <Tool $w={22}><Bino /></Tool><Divider $r={6} />
            <Drop t="整理清单" tight /><Drop t="安装费用" /><Drop t="单价构成" /><Drop t="批量换算" /><Drop t="其他" tight />
            <DropTool $tight><Tool><Expand />展开到</Tool><Caret /></DropTool>
            <Tool>重用组价</Tool>
            <Combo aria-label="颜色" />
            <Tool $w={22}><Bucket /></Tool><Caret />
            <Divider $l={7} $r={7} />
            <Tool $w={22}><Arrow d={0} /></Tool><Tool $w={21}><Arrow d={180} /></Tool>
            <Tool $dim><Extract />提取图形工程量</Tool>
          </Segment>
          <GridBox>
            <GridTop>
              <GridClip>
                <Table>
                  <colgroup>{cols.map(([c, w]) => <col key={c} width={w} />)}</colgroup>
                  <thead><tr>{cols.map(([c]) => <Th key={c} $hot={c === "名称"}>{c}</Th>)}</tr></thead>
                  <tbody>
                    {rows.map((r, i) => {
                      const on = i === rows.length - 1;
                      return (
                        <tr key={r[0]}>
                          <Td $bg={on ? "#ffd08a" : "#f0f0f0"} />
                          <CodeTd><CodeCell><Guide $w={9} /><Guide $w={10} /><Guide $w={10} /><Dash /><T>{r[0]}</T></CodeCell></CodeTd>
                          <Td $a="center">定</Td>
                          <Td $bg={on ? "#d9e9f8" : undefined}><T>{r[1]}</T></Td>
                          <Td />
                          {r.slice(2).map((v, k) => <Td key={k} $a={k > 1 ? "right" : undefined}><T>{v}</T></Td>)}
                          <Td $a="right">装饰工程</Td>
                        </tr>
                      );
                    })}
                  </tbody>
                </Table>
              </GridClip>
              <VScroll>
                <ScrollButton aria-label="上"><Chevron d={UP} /></ScrollButton>
                <Thumb $w={15} $h={17} $t={3} />
                <Push />
                <ScrollButton aria-label="下"><Chevron d={DOWN} /></ScrollButton>
              </VScroll>
            </GridTop>
            <HScroll>
              <ScrollButton aria-label="左"><Chevron d={LEFT} /></ScrollButton><Thumb $w={17} $h={15} /><Push /><ScrollButton aria-label="右"><Chevron d={RIGHT} /></ScrollButton>
              <ScrollCorner />
            </HScroll>
            <Ink $x={38} $y={100} width="362" height="72" viewBox="0 0 362 72" fill="none"><ellipse cx="180" cy="36" rx="178" ry="33" stroke="#f00" strokeWidth="3" /></Ink>
          </GridBox>
          <Splitter><Handle /></Splitter>
          <Tabs>
            {detailTabs.map((t) => <Tab key={t}>{t}</Tab>)}
            <TabOn><span>说明信息</span></TabOn>
          </Tabs>
          <Info>
            <InfoHead>子目工作内容和附注信息</InfoHead>
            <InfoBody>
              <p><T>工作内容:</T><br /><T>清理基层、调运砂浆、刷素水泥浆、抹面、压光、养护.</T></p>
              <p><T>附注信息:</T><br /><T>水泥砂浆楼地面面层厚度每增减5mm, 按找平层中厚度每增减5mm子目执行.</T></p>
              <Ink $x={17} $y={29} width="328" height="5"><path d="M0 2.500h328" stroke="#f00" strokeWidth="3" /><path d="M24 2.500h280" stroke="#f00" strokeWidth="5" /></Ink>
            </InfoBody>
          </Info>
        </Main>
      </Work>

      <Status>
        {status.map(([s, g]) => <StatusCell key={s} $g={g}><T>{s}</T></StatusCell>)}
      </Status>

      <TaskBar>
        <Start aria-label="开始"><I><path d="M0 2.300l7-1v6.200H0zM8 1.200L16 0v7.500H8zM0 8.500h7v6.200l-7-1zM8 8.500h8V16l-8-1.200z" fill="#fff" /></I></Start>
        <Search>
          <I w={24} h={24}><circle cx="12" cy="12" r="9.500" stroke="#fff" strokeWidth="2.500" /></I>
          <input placeholder="在这里输入你要搜索的内容" aria-label="搜索" />
          <I w={12} h={18}><rect x="3.500" y="1" width="5" height="10" stroke="#aaa" /><path d="M1 8v5.500h10V8M6 13.500V17M3 17h6" stroke="#aaa" /></I>
        </Search>
        <Ghost $x={438} $y={11} $c="#0b1621">5</Ghost>
        <Ghost $x={474} $y={11} $c="#0e1a27">下一页</Ghost>
        <Task $w={49} aria-label="任务视图"><I w={22} h={14}><path d="M5.500.5h11v13h-11zM3.500 2.500h-3v9h3M18.500 2.500h3v9h-3" stroke="#fff" strokeWidth="1.200" /></I></Task>
        <Task $w={51} aria-label="浏览器">
          <I w={22} h={22}>
            <path d="M1 6c0-6 9-6 10-2v7H6C2 11 1 9 1 6z M16 1c6 0 6 9 2 10h-7V6c0-4 2-5 5-5z M21 16c0 6-9 6-10 2v-7h5c4 0 5 2 5 5z M6 21c-6 0-6-9-2-10h7v5c0 4-2 5-5 5z" fill="#ececec" stroke="#262626" />
            <path d="M8 3c3 1 4 4 3 8 4-1 7 0 8 3M11 11c-4 1-7 0-8-3M11 11c-1 4 0 7 3 8" stroke="#262626" />
          </I>
        </Task>
        <Task $w={51} aria-label="IE"><IeE c="#f0f0f0" ring="#f0f0f0" s={24} /></Task>
        <Task $w={52} aria-label="G"><svg width="20" height="20" viewBox="0 0 24 24" fill="none"><path d="M21 3C9 0 2 7 3 14c1 9 15 10 18 2 1.500-5-3-8-7-6.500-4 2-3 6.500.500 6.500 2 0 2.500-1.500 2.500-2.500M18 6C10 4 6 9 7 14c1 5 7 6 10 4" stroke="#d8d8d8" strokeWidth="1.700" /></svg></Task>
        <Task $w={49} aria-label="Edge"><I w={22} h={22}><path d="M1 10C2 4 6 1 11 1c6 0 10 4 10 9v3H7.500c.5 5.500 8 6 12 3.500V20C13 23.500 3 22 3 14c0-4 2-6 5-7-1 1-1.500 2-1.500 3H15c0-6-9-7-14 0z" fill="#0a78d7" /></I></Task>
        <Task $w={47} aria-label="应用商店"><I w={24} h={24}><path d="M1 6h22v17H1z" fill="#fff" /><path d="M7.500 6c0-6.500 9-6.500 9 0" stroke="#fff" strokeWidth="1.500" /><path d="M7 9h4.500v4.500H7z" fill="#f25022" /><path d="M13 9h4.500v4.500H13z" fill="#7fba00" /><path d="M7 15h4.500v4.500H7z" fill="#00a4ef" /><path d="M13 15h4.500v4.500H13z" fill="#ffb900" /></I></Task>
        <Task $w={47} aria-label="文件资源管理器"><I w={22} h={18}><path d="M0 0h8l1.500 2H22v16H0z" fill="#f8d775" /><path d="M0 4h22v13H0z" fill="#ffe9a2" /><path d="M4 18v-7h14v7h-4v-3.500H8V18z" fill="#3cb1ea" /></I></Task>
        <Task $w={47} aria-label="Internet Explorer"><IeE c="#49b3ef" ring="#f3c93c" s={26} /></Task>
        <Task $w={47} $run $on aria-label="广联达计价软件"><AppLogo s={24} /></Task>
        <Task $w={47} $run aria-label="云助手"><I w={24} h={24}><rect width="24" height="24" rx="4" fill="#0b8bf0" /><path d="M5 13h14M11 18V9c0-4 4-5 5-2M5 13c0 3 3.500 4 6 2M19 13c0 3-3 4-5 2M8 17c1 3 6 3 7 0" stroke="#fff" strokeWidth="1.800" /></I></Task>
        <Task $w={47} $run aria-label="广联达"><svg width="24" height="24" viewBox="0 0 24 24"><path d="M22 1C10 0 1 6 1 14c0 6 5 9.500 11 9.500 7 0 11-4.500 11-9.500 0-4-3-7-7-7-4 0-6.500 3-6 6 .5 3 4 3.500 5.500 1.500C17 18 8 20 7 13.500 6.500 9 10 5 15 4c3-.5 5.500-1 7-3z" fill="#28a8ef" /></svg></Task>
        <Task $w={43} $run aria-label="360浏览器"><svg width="24" height="24" viewBox="0 0 24 24" fill="none"><circle cx="12" cy="12" r="10" fill="#45b82f" stroke="#d9f5cf" strokeWidth="1.500" /><path d="M7 12.500h10C17 6 7.500 6 7 12c0 5.500 7 6 9.500 3" stroke="#fff" strokeWidth="2.400" /></svg></Task>
        <Ghost $x={770} $y={0} $c="rgba(0,0,0,.6)">云计价后续费 、营改增答疑</Ghost>
        <Tray>
          <TrayText $w={62} $back={24}>18%<br />CPU使用</TrayText>
          <TrayItem $w={36} aria-label="更多"><I w={12} h={8}><path d="M1 7l5-5 5 5" stroke="#fff" strokeWidth="1.300" /></I></TrayItem>
          <TrayItem $w={16} aria-label="电源"><I><path d="M5.500 5.500h9v6h-9zM15.500 7v3" stroke="#fff" /><path d="M7 7h6v3H7z" fill="#fff" /><path d="M1 2v3M4 2v3M0 5h5v2.500H0zM2.500 7v4H5" stroke="#fff" /></I></TrayItem>
          <TrayItem $w={30} aria-label="网络"><I w={14} h={14}><path d="M1 13C1 6 6 1 13 1M4.500 13c0-5 3.500-8.500 8.500-8.500M8 13c0-3 2-5 5-5" stroke="#ccc" strokeWidth="1.200" /><path d="M10 14v-3l3-1v4z" fill="#fff" /></I></TrayItem>
          <TrayItem $w={16} aria-label="音量"><I><path d="M1 6h2l3-3v10l-3-3H1z" stroke="#fff" /><path d="M8.500 6c1 1 1 3 0 4M10.500 4c2 2 2 6 0 8M13 2.500c3 3 3 8 0 11" stroke="#ddd" /></I></TrayItem>
          <TrayItem $w={38} aria-label="键盘"><Keyboard c="#fff" w={23} /></TrayItem>
          <TrayItem $w={20} aria-label="中文"><Zhong c="#fff" /></TrayItem>
          <TrayItem $w={36} aria-label="搜狗输入法"><SogouS s={15} /></TrayItem>
          <TrayText $w={74}>20:09<br />2017/11/24</TrayText>
          <Notice $w={40} aria-label="通知"><I w={18} h={16}><path d="M1 0h16v12H9l-4 4v-4H1z" fill="#fff" /><path d="M4 3.500h10M4 6h10M4 8.500h7" stroke="#000" /></I><Badge>21</Badge></Notice>
        </Tray>
      </TaskBar>

      <Ime>
        <ImeLogo><SogouS s={29} /></ImeLogo>
        <ImeKey $w={18} aria-label="中文"><Zhong c="#1d74c9" /></ImeKey>
        <ImeKey $w={26} aria-label="标点"><I w={13} h={13}><circle cx="3" cy="3" r="2" stroke="#1d74c9" strokeWidth="1.400" /><path d="M9 8h3.500c0 3-1 4-3 5l1-2.500H9z" fill="#1d74c9" /></I></ImeKey>
        <ImeKey $w={20} aria-label="语音"><I w={14}><rect x="4" y="0" width="6" height="10" rx="3" fill="#1d74c9" /><path d="M1.500 7c0 7 11 7 11 0M7 12v3M4 15.300h6" stroke="#1d74c9" strokeWidth="1.500" /></I></ImeKey>
        <ImeKey $w={24} aria-label="软键盘"><Keyboard c="#1d74c9" w={17} /></ImeKey>
        <ImeKey $w={23} aria-label="账户"><I w={17}><circle cx="7" cy="4" r="3" fill="#a9b9cf" /><path d="M1 14c0-8 12-8 12 0z" fill="#a9b9cf" /><path d="M7 9h9.500v6H7z" fill="#dfe6ef" stroke="#a9b9cf" /><path d="M9.500 10.500v3.500M12 14h2v-3.500h-2V12h2" stroke="#8c9db5" /></I></ImeKey>
        <ImeKey $w={18} aria-label="皮肤"><I w={15} h={14}><path d="M4.500 0c1 2 5 2 6 0L15 3l-1.500 4-2-1v8h-8V6l-2 1L0 3z" fill="#1d74c9" /></I></ImeKey>
        <ImeKey $w={24} aria-label="工具"><I w={15} h={15}><path d="M2 13l6-6" stroke="#1d74c9" strokeWidth="3" strokeLinecap="round" /><path d="M14 3.500l-3 1.500-1.500-1.500L11 .5C8 0 6 3 7.500 5.500S13 8 14.500 5z" fill="#1d74c9" /></I></ImeKey>
      </Ime>

      <Meter>
        <Pill>
          <I w={8} h={15}><path d="M4 3.500l3.500 4H5V12H3V7.500H.5z" fill="#f0523c" /></I><span>0K/s</span>
          <I w={8} h={15}><path d="M4 12l3.500-4H5V3.500H3V8H.5z" fill="#1e9a4a" /></I><span>0K/s</span>
        </Pill>
        <Plus><I w={22} h={22}><circle cx="9" cy="13" r="8.500" fill="#2e7be0" /><path d="M9 9v8M5 13h8" stroke="#fff" strokeWidth="2" /><circle cx="15" cy="7" r="4" fill="#d92a2a" /></I></Plus>
        <Ball>65%</Ball>
      </Meter>
    </Shell>
  );
}
